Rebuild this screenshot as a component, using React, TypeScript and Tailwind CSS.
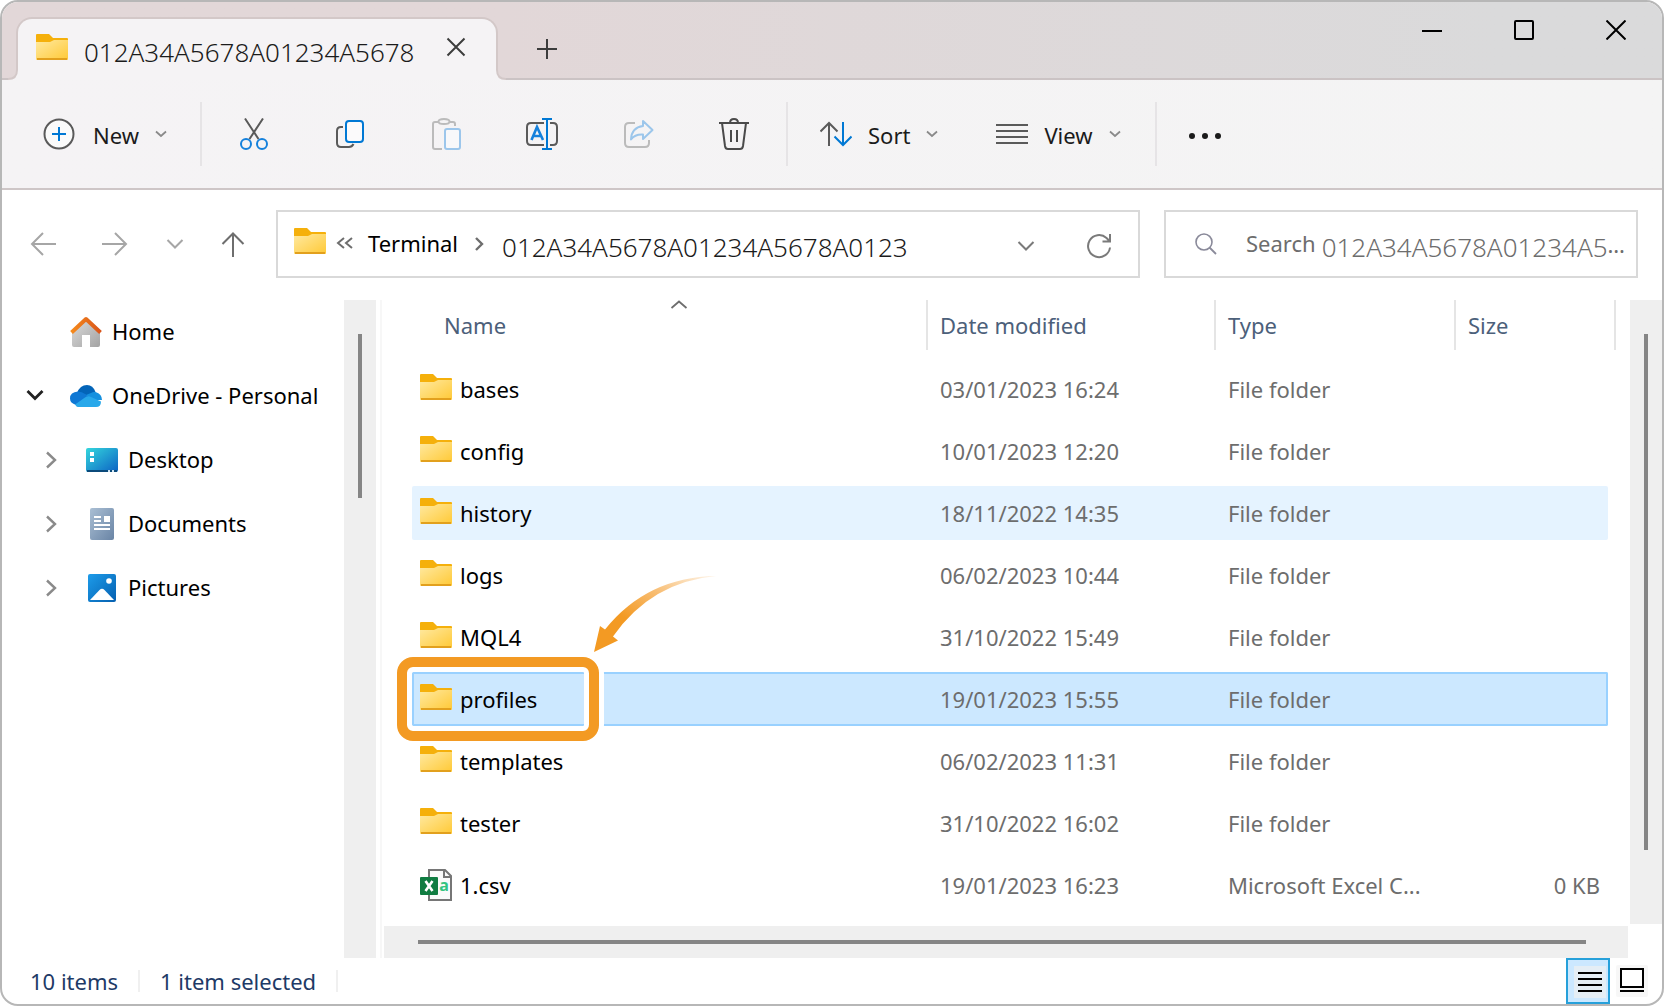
import type { ReactNode } from "react";

const DIGITS = "font-['Noto_Sans',sans-serif] font-light text-[26px] leading-8";

type IconProps = { className?: string; w?: number; h?: number; children: ReactNode };

function Icon({ className = "", w = 32, h = 32, children }: IconProps) {
  return (
    <svg
      className={`block shrink-0 ${className}`}
      width={w}
      height={h}
      viewBox={`0 0 ${w} ${h}`}
      fill="none"
      stroke="currentColor"
      strokeWidth={2}
      aria-hidden="true"
    >
      {children}
    </svg>
  );
}

function Folder() {
  return (
    <Icon w={32} h={26}>
      <path d="M1 0H13L17 4H31Q32 4 32 5V12H0V1Q0 0 1 0Z" fill="#f5b00b" stroke="none" />
      <path d="M0 8H14L18 6H32V25Q32 26 31 26H1Q0 26 0 25Z" fill="url(#folder-face)" stroke="none" />
      <path d="M1 24H31V26H1Z" fill="#e2a01d" stroke="none" />
    </Icon>
  );
}

function Chevron({ className = "" }: { className?: string }) {
  return (
    <Icon w={12} h={8} className={className}>
      <path d="M1 1.5L6 6L11 1.5" strokeWidth={1.8} />
    </Icon>
  );
}

function Gradients() {
  return (
    <svg className="absolute size-0" aria-hidden="true">
      <defs>
        <linearGradient id="folder-face" x1="0" y1="0" x2="1" y2="1">
          <stop offset="0" stopColor="#ffe9a0" />
          <stop offset="1" stopColor="#ffc936" />
        </linearGradient>
        <linearGradient id="roof" x1="0" y1="0" x2="1" y2="0">
          <stop offset="0" stopColor="#f58a1c" />
          <stop offset="1" stopColor="#d9541a" />
        </linearGradient>
        <linearGradient id="wall" x1="0" y1="0" x2="1" y2="1">
          <stop offset="0" stopColor="#dcdcdc" />
          <stop offset="1" stopColor="#a3a3a3" />
        </linearGradient>
        <linearGradient id="desk" x1="0" y1="0" x2="1" y2="1">
          <stop offset="0" stopColor="#34d6dd" />
          <stop offset="1" stopColor="#0c62c4" />
        </linearGradient>
        <linearGradient id="doc" x1="0" y1="0" x2="1" y2="1">
          <stop offset="0" stopColor="#aabfd4" />
          <stop offset="1" stopColor="#6984a5" />
        </linearGradient>
        <linearGradient id="pic" x1="0" y1="0" x2="1" y2="1">
          <stop offset="0" stopColor="#1d9cea" />
          <stop offset="1" stopColor="#0560b0" />
        </linearGradient>
        <linearGradient id="swoosh" x1="0" y1="1" x2="1" y2="0">
          <stop offset="0.35" stopColor="#f39a23" />
          <stop offset="0.65" stopColor="#f8bd72" />
          <stop offset="0.95" stopColor="#fdeedb" />
        </linearGradient>
      </defs>
    </svg>
  );
}

function TabFoot({ className }: { className: string }) {
  return (
    <Icon w={10} h={10} className={`absolute bottom-0 ${className}`}>
      <path d="M0 0H1Q1 9 10 9V10H0Z" fill="#f5f3f5" stroke="none" />
      <path d="M1 0Q1 9 10 9" stroke="#d3c8c8" />
    </Icon>
  );
}

function TitleBar() {
  return (
    <header className="flex h-[78px] items-end border-b-2 border-[#cbc3c4] bg-linear-to-r from-[#e2d7d8] from-30% to-[#dadadb] to-90%">
      <div className="relative -mb-0.5 ml-3.5 flex h-[63px] w-[482px] shrink-0 items-center rounded-t-2xl border-2 border-b-0 border-[#d3c8c8] bg-[#f5f3f5] pr-[30px] pl-[18px]">
        <TabFoot className="-left-2.5 -scale-x-100" />
        <TabFoot className="-right-2.5" />
        <div className="-mt-1.5">
          <Folder />
        </div>
        <span className={`${DIGITS} ml-4 mt-1 flex-1 whitespace-nowrap text-[#1b1b1b]`}>012A34A5678A01234A5678</span>
        <button type="button" aria-label="Close tab" className="-mt-1.5 text-[#3c3c3c]">
          <Icon w={20} h={20}>
            <path d="M1.500 1.500L18.500 18.500M18.500 1.500L1.500 18.500" />
          </Icon>
        </button>
      </div>
      <button type="button" aria-label="New tab" className="mb-[19px] ml-[39px] text-[#3c3c3c]">
        <Icon w={20} h={20}>
          <path d="M0 10H20M10 0V20" />
        </Icon>
      </button>
      <div className="ml-auto flex gap-[72px] self-start pt-[18px] pr-9 text-black">
        <button type="button" aria-label="Minimize">
          <Icon w={20} h={20}>
            <path d="M0 11H20" />
          </Icon>
        </button>
        <button type="button" aria-label="Maximize">
          <Icon w={20} h={20}>
            <rect x="1" y="1" width="18" height="18" rx="1" />
          </Icon>
        </button>
        <button type="button" aria-label="Close">
          <Icon w={20} h={20}>
            <path d="M0.500 0.500L19.500 19.500M19.500 0.500L0.500 19.500" />
          </Icon>
        </button>
      </div>
    </header>
  );
}

const tools: { label: string; icon: ReactNode }[] = [
  {
    label: "Cut",
    icon: (
      <>
        <path d="M7 0.500L20.500 21M25 0.500L11.500 21" stroke="#5a5a5a" />
        <circle cx="8" cy="26" r="5" stroke="#1581dc" />
        <circle cx="24" cy="26" r="5" stroke="#1581dc" />
      </>
    ),
  },
  {
    label: "Copy",
    icon: (
      <>
        <path d="M9 9H7Q3 9 3 13V25Q3 29 7 29H15Q18 29 19.500 26" stroke="#5a5a5a" />
        <rect x="12" y="3" width="17" height="21" rx="3" fill="#fbfafb" stroke="#0078d4" />
      </>
    ),
  },
  {
    label: "Paste",
    icon: (
      <>
        <path d="M8 4H5Q3 4 3 6V29Q3 31 5 31H12M20 4H23Q25 4 25 6V8" stroke="#bbb" />
        <ellipse cx="14" cy="3.500" rx="5.500" ry="2.500" stroke="#bbb" />
        <rect x="15" y="11" width="15" height="20" rx="2" fill="#f8f8fa" stroke="#9cc6eb" />
      </>
    ),
  },
  {
    label: "Rename",
    icon: (
      <>
        <path d="M18 5H5Q1 5 1 9V23Q1 27 5 27H18M24 5H27Q31 5 31 9V23Q31 27 27 27H24" stroke="#5a5a5a" />
        <path d="M5.500 22L11 9L17 22M7.500 18H15" stroke="#1581dc" strokeWidth={2.600} />
        <path d="M21 1V31M16 1H26M16 31H26" stroke="#0078d4" />
      </>
    ),
  },
  {
    label: "Share",
    icon: (
      <>
        <path d="M13 5H7Q3 5 3 9V25Q3 29 7 29H23Q27 29 27 25V22" stroke="#bbb" />
        <path
          d="M21 3L30.500 12L21 21V16.500Q13 16 9 21.500Q9.500 9.500 21 8Z"
          stroke="#9cc6eb"
          strokeLinejoin="round"
        />
      </>
    ),
  },
  {
    label: "Delete",
    icon: (
      <>
        <path d="M1 5H31M12 5Q12 1 16 1Q20 1 20 5M4 5L7 28Q7.500 31 10 31H22Q24.500 31 25 28L28 5" stroke="#4a4a4a" />
        <path d="M13 12V24M19 12V24" stroke="#4a4a4a" />
      </>
    ),
  },
];

function Divider() {
  return <span className="h-16 w-0.5 shrink-0 bg-[#e6e4e6]" />;
}

function Toolbar() {
  return (
    <div
      role="toolbar"
      aria-label="Commands"
      className="flex h-[110px] items-center border-b-2 border-[#cec6c7] bg-linear-to-r from-[#f5f3f5] to-[#f4f4f4] pb-px text-[22px] text-[#1b1b1b]"
    >
      <button type="button" className="flex w-[198px] shrink-0 items-center pl-[41px]">
        <Icon>
          <circle cx="16" cy="16" r="14.500" stroke="#5a5a5a" fill="#fafafa" />
          <path d="M9 16H23M16 9V23" stroke="#0078d4" />
        </Icon>
        <span className="mt-1 ml-[18px]">New</span>
        <Chevron className="ml-4 text-[#8a8a8a]" />
      </button>
      <Divider />
      <div className="flex shrink-0 gap-16 px-9">
        {tools.map((t) => (
          <button key={t.label} type="button" aria-label={t.label}>
            <Icon>{t.icon}</Icon>
          </button>
        ))}
      </div>
      <Divider />
      <button type="button" className="ml-8 flex shrink-0 items-center">
        <Icon>
          <path d="M9 28V5M0.500 13.500L9 5L17.500 13.500" stroke="#5a5a5a" />
          <path d="M23 4V27M14.500 18.500L23 27L31.500 18.500" stroke="#0078d4" />
        </Icon>
        <span className="mt-1 ml-4">Sort</span>
        <Chevron className="ml-4 text-[#8a8a8a]" />
      </button>
      <button type="button" className="ml-[58px] flex shrink-0 items-center">
        <Icon>
          <path d="M0 7H32M0 13H32M0 19H32M0 25H32" stroke="#5a5a5a" />
        </Icon>
        <span className="mt-1 ml-4">View</span>
        <Chevron className="ml-4 text-[#8a8a8a]" />
      </button>
      <div className="ml-[34px] flex items-center">
        <Divider />
        <button type="button" aria-label="See more" className="ml-8">
          <Icon>
            <g fill="#1b1b1b" stroke="none">
              <circle cx="3" cy="18" r="3" />
              <circle cx="16" cy="18" r="3" />
              <circle cx="29" cy="18" r="3" />
            </g>
          </Icon>
        </button>
      </div>
    </div>
  );
}

function AddressRow() {
  return (
    <div className="flex h-[110px] items-center pb-0.5 pr-6">
      <div className="flex w-[274px] shrink-0 items-center pl-7">
        <button type="button" aria-label="Back" className="text-[#a6a6a6]">
          <Icon w={28} h={28}>
            <path d="M26 14H2M13 3L2 14L13 25" />
          </Icon>
        </button>
        <button type="button" aria-label="Forward" className="ml-[43px] text-[#a6a6a6]">
          <Icon w={28} h={28}>
            <path d="M1 14H25M14 3L25 14L14 25" />
          </Icon>
        </button>
        <button type="button" aria-label="Recent locations" className="ml-9 text-[#a6a6a6]">
          <Icon w={20} h={12}>
            <path d="M2.500 2L10 9.500L17.500 2" />
          </Icon>
        </button>
        <button type="button" aria-label="Up" className="ml-9 text-[#6e6e6e]">
          <Icon w={24} h={28}>
            <path d="M12 27V4M1.500 14L12 3.500L22.500 14" />
          </Icon>
        </button>
      </div>
      <nav
        aria-label="Address"
        className="flex h-[68px] min-w-0 flex-1 items-center border-2 border-[#d9d9d9] pr-[26px] pl-4 text-[22px]"
      >
        <div className="-mt-1.5">
          <Folder />
        </div>
        <Icon w={18} h={12} className="-mt-0.5 ml-2.5 text-[#6e6e6e]">
          <path d="M8 1L2 6L8 11M16 1L10 6L16 11" />
        </Icon>
        <button type="button" className="-mt-0.5 ml-3.5 text-black">
          Terminal
        </button>
        <Icon w={10} h={14} className="ml-4 text-[#6e6e6e]">
          <path d="M2 1L8 7L2 13" strokeWidth={2.400} />
        </Icon>
        <button type="button" className={`${DIGITS} ml-[18px] mt-1.5 whitespace-nowrap text-[#1b1b1b]`}>
          012A34A5678A01234A5678A0123
        </button>
        <button type="button" aria-label="Previous locations" className="mt-1 ml-auto text-[#7a7a7a]">
          <Icon w={20} h={12}>
            <path d="M2.500 2L10 9.500L17.500 2" />
          </Icon>
        </button>
        <button type="button" aria-label="Refresh" className="mt-1 ml-[50px] text-[#7a7a7a]">
          <Icon w={26} h={26}>
            <path d="M24 14.500A11 11 0 1 1 20.500 5L23.500 8M24 1V8.500H16.500" />
          </Icon>
        </button>
      </nav>
      <label className="relative ml-6 flex h-[68px] w-[474px] shrink-0 items-center border-2 border-[#d9d9d9] pl-7 text-[22px] text-[#6d6d6d]">
        <input type="search" aria-label="Search" className="absolute inset-0 bg-transparent px-7 outline-none" />
        <Icon w={24} h={24} className="text-[#8a8a9a]">
          <circle cx="10" cy="10" r="8" strokeWidth={1.600} />
          <path d="M15.500 15.500L22 22" strokeWidth={1.800} />
        </Icon>
        <span className="-mt-0.5 ml-7">Search</span>
        <span className={`${DIGITS} mt-1.5 ml-1.5`}>012A34A5678A01234A5</span>
        <span>…</span>
      </label>
    </div>
  );
}

function HomeIcon() {
  return (
    <Icon>
      <path d="M2 15L16 3L30 15V29Q30 31 28 31H20V19H12V31H4Q2 31 2 29Z" fill="url(#wall)" stroke="none" />
      <path d="M1.500 16.500L16 3L30.500 16.500" stroke="url(#roof)" strokeWidth={4} strokeLinejoin="round" />
    </Icon>
  );
}

function CloudIcon() {
  return (
    <Icon>
      <g stroke="none">
        <path d="M7 13Q10 5 17 5Q23 5 25.500 12L20 16Z" fill="#0364b8" />
        <path d="M6 25Q0 23 0 18.500Q0 12 8 11.500Q12 11.500 15 14L22 18L8 27Z" fill="#0f78d4" />
        <path d="M21 13Q23 11.500 25.500 12Q32 14 32 20L24 20L16 15Z" fill="#1490df" />
        <path d="M5 24.500L15 17.500Q18 15.500 21 17L31 21.500Q31 27 26 27H9Q6 27 5 24.500Z" fill="#28a8ea" />
      </g>
    </Icon>
  );
}

function DesktopIcon() {
  return (
    <Icon>
      <rect y="4" width="32" height="24" rx="2" fill="url(#desk)" stroke="none" />
      <path d="M4 8H8V12H4ZM4 14H8V18H4Z" fill="#fff" stroke="none" />
      <path d="M1 27H31" stroke="#0b4a7a" />
      <path d="M22 27H30" stroke="#cfe6f5" strokeDasharray="2 2" />
    </Icon>
  );
}

function DocumentsIcon() {
  return (
    <Icon>
      <rect x="4" width="24" height="32" rx="2" fill="url(#doc)" stroke="none" />
      <path d="M8 9H15M8 13H15M8 17H24M8 21H24" stroke="#fff" />
      <path d="M18 8H24V14H18Z" fill="#fff" stroke="none" />
    </Icon>
  );
}

function PicturesIcon() {
  return (
    <Icon>
      <rect x="2" y="2" width="28" height="28" rx="2" fill="url(#pic)" stroke="none" />
      <path d="M4 28L13.500 18Q16 15.500 18.500 18L28 28Z" fill="#fff" stroke="none" />
      <circle cx="23" cy="9" r="2.800" fill="#fff" stroke="none" />
    </Icon>
  );
}

const children = [
  { label: "Desktop", icon: <DesktopIcon /> },
  { label: "Documents", icon: <DocumentsIcon /> },
  { label: "Pictures", icon: <PicturesIcon /> },
];

function Sidebar() {
  return (
    <nav aria-label="Folders" className="w-[342px] shrink-0 text-[22px] text-black">
      <button type="button" className="flex h-16 items-center gap-2.5 pl-[68px]">
        <HomeIcon />
        <span className="pb-0.5">Home</span>
      </button>
      <button type="button" className="flex h-16 items-center gap-2.5 pl-6">
        <Icon w={18} h={12} className="mr-4 text-[#222]">
          <path d="M1.500 1L9 8.500L16.500 1" strokeWidth={2.800} />
        </Icon>
        <CloudIcon />
        <span className="pb-0.5 whitespace-nowrap">OneDrive - Personal</span>
      </button>
      {children.map((c) => (
        <button key={c.label} type="button" className="flex h-16 items-center gap-2.5 pl-[43px]">
          <Icon w={12} h={18} className="mr-[19px] text-[#8a8a8a]">
            <path d="M2 1.500L10 9L2 16.500" strokeWidth={2.400} />
          </Icon>
          {c.icon}
          <span className="pb-0.5">{c.label}</span>
        </button>
      ))}
    </nav>
  );
}

function CsvIcon() {
  return (
    <Icon>
      <path d="M9 1H25L31 7V31H9Z" fill="#fafafa" stroke="#767676" />
      <path d="M24 1V8H31" stroke="#767676" />
      <rect y="8" width="18" height="18" rx="1" fill="#107c41" stroke="none" />
      <path d="M5.500 12L12.500 22M12.500 12L5.500 22" stroke="#fff" strokeWidth={2.600} />
      <text x="24" y="22" textAnchor="middle" fontSize="16" fontWeight="700" fill="#33c481" stroke="none" fontFamily="Noto Sans">
        a
      </text>
    </Icon>
  );
}

type Row = { name: string; date: string; type?: string; size?: string; state?: "hover" | "selected" };

const rows: Row[] = [
  { name: "bases", date: "03/01/2023 16:24" },
  { name: "config", date: "10/01/2023 12:20" },
  { name: "history", date: "18/11/2022 14:35", state: "hover" },
  { name: "logs", date: "06/02/2023 10:44" },
  { name: "MQL4", date: "31/10/2022 15:49" },
  { name: "profiles", date: "19/01/2023 15:55", state: "selected" },
  { name: "templates", date: "06/02/2023 11:31" },
  { name: "tester", date: "31/10/2022 16:02" },
  { name: "1.csv", date: "19/01/2023 16:23", type: "Microsoft Excel C...", size: "0 KB" },
];

function cellLook(state: Row["state"]) {
  if (state === "hover") return "bg-[#e5f3ff]";
  if (state === "selected") return "bg-[#cce8ff] border-y-2 border-[#99d1ff]";
  return "";
}

function Callout() {
  return (
    <>
      <span className="pointer-events-none absolute -top-[15px] -left-[15px] h-[84px] w-[202px] rounded-2xl border-10 border-[#f39a23] shadow-[0_0_0_5px_#fff,inset_0_0_0_5px_#fff]" />
      <svg
        className="pointer-events-none absolute -top-[98px] left-[180px]"
        width="128"
        height="80"
        viewBox="0 0 128 80"
        aria-hidden="true"
      >
        <path d="M2 78L8 52L13 55.500Q55 3 124 2Q59 8 21 62.500L26 66.500Z" fill="url(#swoosh)" />
      </svg>
    </>
  );
}

function FileTable() {
  return (
    <table className="w-full table-fixed text-left text-[22px] text-[#6d6d6d]">
      <colgroup>
        <col />
        <col className="w-72" />
        <col className="w-60" />
        <col className="w-[152px]" />
        <col className="w-2" />
      </colgroup>
      <thead className="text-[#4c607a]">
        <tr>
          <th scope="col" className="relative p-0 pb-2 font-normal">
            <div className="flex h-[50px] items-center border-r-2 border-[#e5e5e5] pl-8">Name</div>
            <Icon w={18} h={9} className="absolute top-0 left-1/2 text-[#6e6e6e]">
              <path d="M1.500 8L9 1.500L16.500 8" strokeWidth={1.800} />
            </Icon>
          </th>
          <th scope="col" className="p-0 pb-2 font-normal">
            <div className="flex h-[50px] items-center border-r-2 border-[#e5e5e5] pl-3">Date modified</div>
          </th>
          <th scope="col" className="p-0 pb-2 font-normal">
            <div className="flex h-[50px] items-center border-r-2 border-[#e5e5e5] pl-3">Type</div>
          </th>
          <th scope="col" colSpan={2} className="p-0 pb-2 font-normal">
            <div className="flex h-[50px] items-center border-r-2 border-[#e5e5e5] pl-3">Size</div>
          </th>
        </tr>
      </thead>
      <tbody>
        {rows.map((r) => {
          const look = cellLook(r.state);
          const selected = r.state === "selected";
          return (
            <tr key={r.name} aria-selected={selected}>
              <td className="p-0 py-1">
                <div className="relative">
                  <div
                    className={`flex h-[54px] items-center gap-2 rounded-l-xs text-black ${selected ? "border-l-2 pl-1.5" : "pl-2"} ${look}`}
                  >
                    {r.type ? (
                      <CsvIcon />
                    ) : (
                      <div className="-mt-1">
                        <Folder />
                      </div>
                    )}
                    {r.name}
                  </div>
                  {selected && <Callout />}
                </div>
              </td>
              <td className="p-0 py-1">
                <div className={`flex h-[54px] items-center pl-3 ${look}`}>{r.date}</div>
              </td>
              <td className="p-0 py-1">
                <div className={`flex h-[54px] items-center pl-3 ${look}`}>{r.type ?? "File folder"}</div>
              </td>
              <td className="p-0 py-1">
                <div
                  className={`flex h-[54px] items-center justify-end rounded-r-xs pr-2 ${selected ? "border-r-2" : ""} ${look}`}
                >
                  {r.size}
                </div>
              </td>
              <td />
            </tr>
          );
        })}
      </tbody>
    </table>
  );
}

function StatusBar() {
  return (
    <footer className="flex h-[46px] items-center pl-7 text-[22px] text-[#1e3a66]">
      <span>10 items</span>
      <span className="mx-5 h-[22px] w-0.5 bg-[#f0f0f0]" />
      <span>1 item selected</span>
      <span className="mx-5 h-[22px] w-0.5 bg-[#f0f0f0]" />
      <button
        type="button"
        aria-label="Details view"
        className="ml-auto flex h-[46px] w-11 items-center justify-center border-2 border-[#26a0da] bg-[#cce8ff] pt-0.5 pl-1 text-black"
      >
        <Icon className="bg-[#e5eef5]">
          <path d="M4 7H28M4 13H28M4 19H28M4 25H28" />
        </Icon>
      </button>
      <button type="button" aria-label="Thumbnail view" className="mr-3.5 ml-1.5 text-black">
        <Icon className="rounded-xs bg-[#f7f7f7]">
          <rect x="5" y="4" width="22" height="18" fill="#fff" />
          <path d="M4 26H28" />
        </Icon>
      </button>
    </footer>
  );
}

export default function App() {
  return (
    <div className="bg-white">
      <Gradients />
      <div className="flex min-h-screen flex-col overflow-hidden rounded-[18px] border-2 border-[#b7b7b7] bg-white font-['Noto_Sans',sans-serif]">
        <TitleBar />
        <Toolbar />
        <AddressRow />
        <div className="flex flex-1">
          <Sidebar />
          <div className="flex w-8 shrink-0 justify-center bg-[#efefef] pt-[34px]">
            <div className="h-[164px] w-1 bg-[#858585]" />
          </div>
          <div className="ml-1 w-0.5 shrink-0 bg-[#f7f7f7]" />
          <main className="flex min-w-0 flex-1 flex-col">
            <div className="flex flex-1">
              <div className="min-w-0 flex-1 pr-3.5 pl-[30px]">
                <FileTable />
              </div>
              <div className="flex w-8 shrink-0 justify-center bg-[#efefef] pt-[34px] pb-[74px]">
                <div className="w-1 bg-[#858585]" />
              </div>
            </div>
            <div className="mt-0.5 mr-[34px] ml-0.5 flex h-8 items-center bg-[#efefef] pr-[42px] pl-[34px]">
              <div className="h-1 flex-1 bg-[#858585]" />
            </div>
          </main>
        </div>
        <StatusBar />
      </div>
    </div>
  );
}
